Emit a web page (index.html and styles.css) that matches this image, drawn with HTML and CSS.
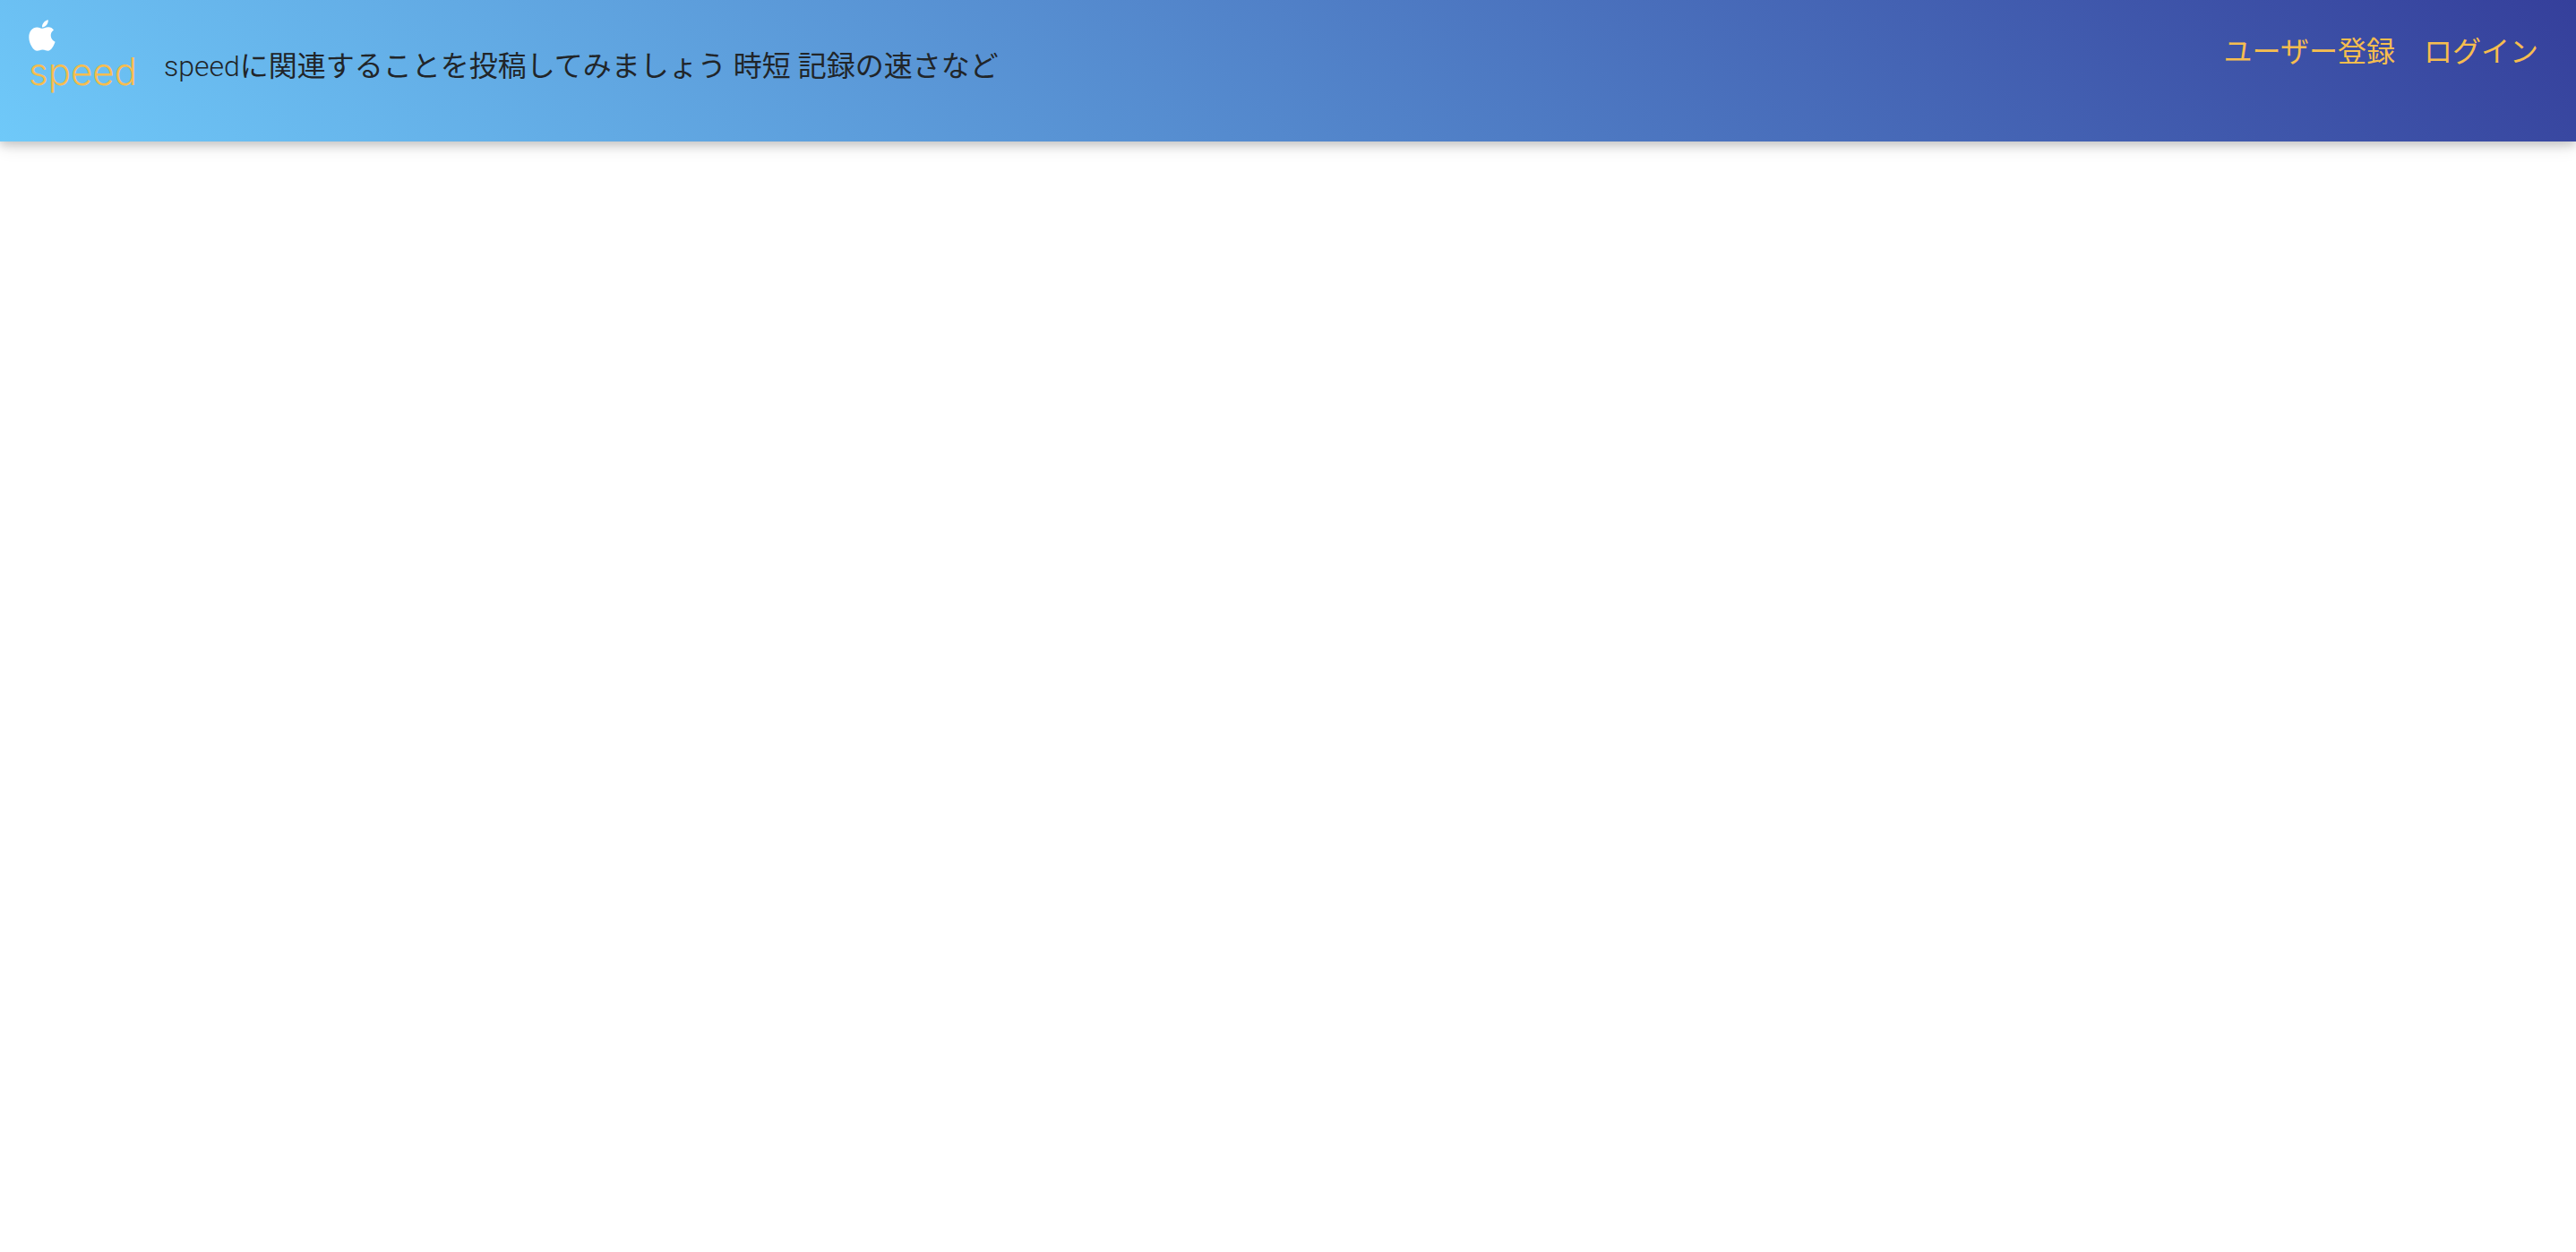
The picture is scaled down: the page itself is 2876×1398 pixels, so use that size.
FILE: index.html
```html
<!DOCTYPE html>
<html lang="ja">
<head>
<meta charset="utf-8">
<meta name="viewport" content="width=device-width, initial-scale=1">
<title>speed</title>
<link rel="stylesheet" href="styles.css">
</head>
<body>
<header class="navbar">
  <a class="brand" href="#">
    <svg class="brand-icon" viewBox="0 0 30 36" aria-hidden="true"><path d="M21.8 0.2C22.2 4.5 18.7 8.6 15 8.5C14.6 4.8 18 .7 21.8.2ZM28 11.6C23 14.8 23.8 22.2 29.6 24.7C28.2 28.8 25.2 34.7 21.5 34.8C19.3 34.8 18.5 33.5 15.6 33.5C12.7 33.5 11.7 34.8 9.6 34.8C5.2 34.8.3 26.5.3 19.4C.3 12.7 4.4 8.4 9.3 8.4C12 8.4 13.8 9.8 15.5 9.8C17 9.8 19 8.2 22 8.2C24.5 8.2 26.6 9.4 28 11.6Z"/></svg>
    <span class="brand-name">speed</span>
  </a>
  <p class="tagline"><span class="latin">speed</span>に関連することを投稿してみましょう 時短 記録の速さなど</p>
  <nav class="links">
    <a class="link" href="#">ユーザー登録</a>
    <a class="link" href="#">ログイン</a>
  </nav>
</header>
</body>
</html>
```
FILE: styles.css
```css
body {
  margin: 0;
  min-height: 100vh;
  background: #fff;
  font-family: Roboto, "Noto Sans CJK JP", sans-serif;
  font-size: 32px;
  line-height: 48px;
  color: #212529;
}

.navbar {
  display: flex;
  align-items: flex-start;
  box-sizing: border-box;
  min-height: 158px;
  padding: 16px 32px;
  background: linear-gradient(40deg, #6fc9f9, #353f9b);
  box-shadow: 0 4px 10px rgba(0, 0, 0, 0.16), 0 4px 20px rgba(0, 0, 0, 0.12);
}

.brand {
  display: flex;
  flex-direction: column;
  margin-right: 30px;
  padding-top: 6px;
  color: #f6bd4f;
  text-decoration: none;
}

.brand-icon {
  width: 30px;
  height: 36px;
  fill: #fff;
}

.brand-name {
  font-family: Inter, sans-serif;
  font-size: 42px;
  font-weight: 350;
  line-height: 44px;
}

.tagline {
  margin: 34px 0 0;
}

.latin {
  font-weight: 350;
}

.links {
  display: flex;
  gap: 32px;
  margin-left: auto;
  padding: 18px 10px 0 0;
}

.link {
  color: #f6bd4f;
  text-decoration: none;
}
```
